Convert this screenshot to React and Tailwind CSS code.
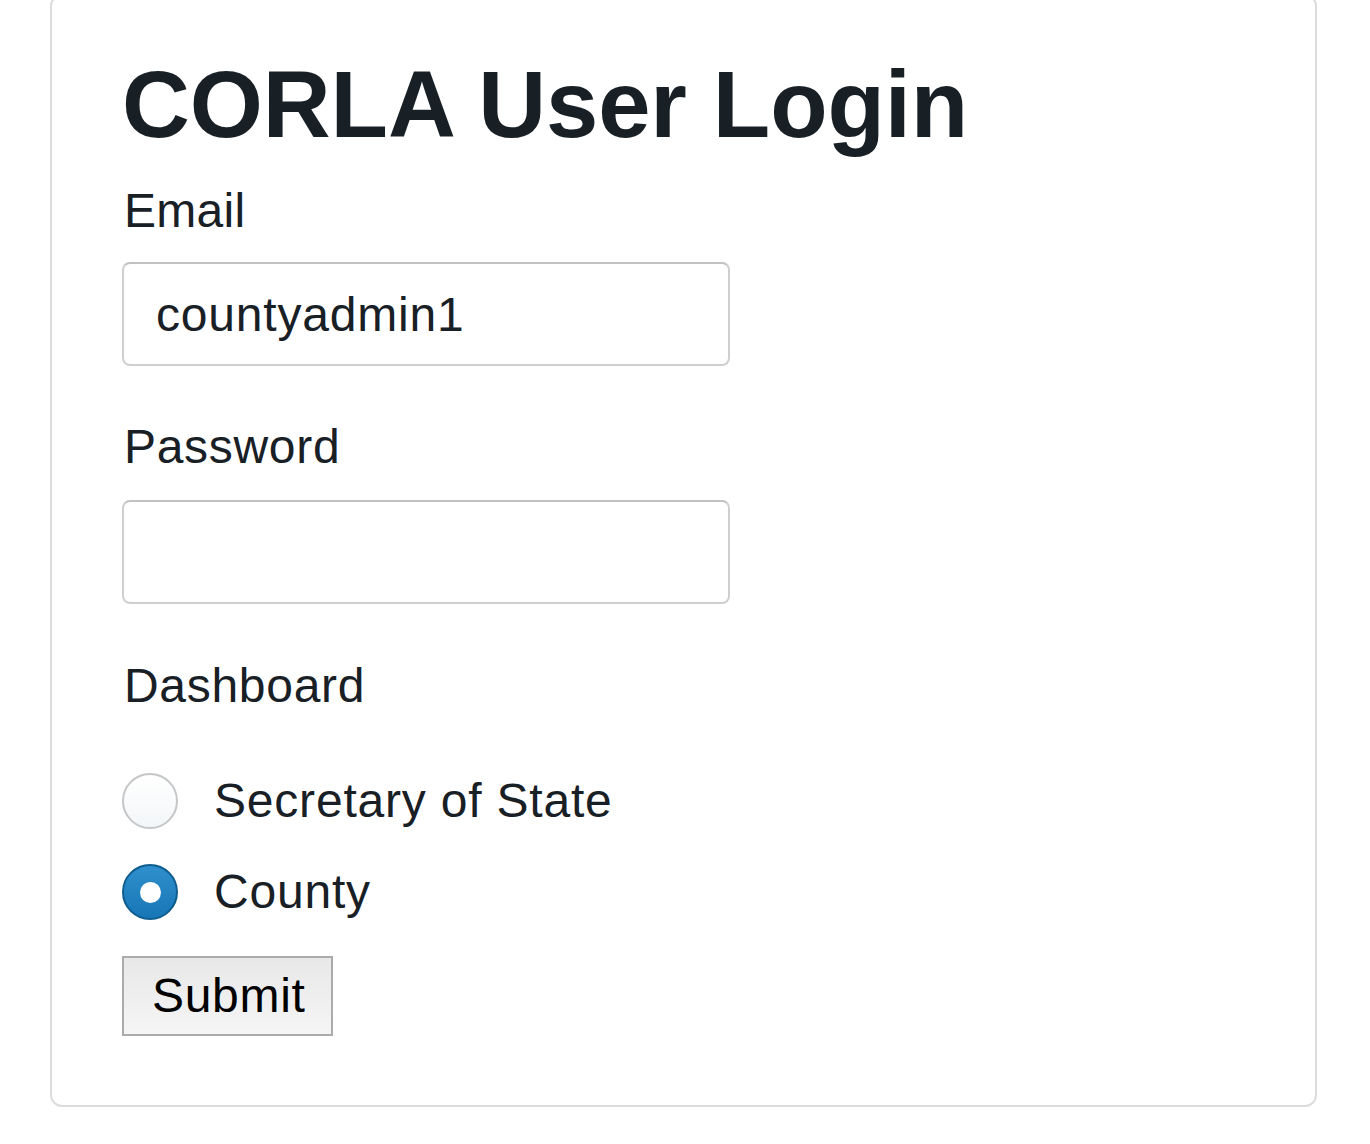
import React, { useState } from 'react';

const font = { fontFamily: '"Liberation Sans", Arial, Helvetica, sans-serif' };

const Radio = ({ checked, label, onChange }) => (
    <label className="flex items-center h-[56px] cursor-pointer">
        <span
            className={`w-[56px] h-[56px] rounded-full flex items-center justify-center shrink-0 ${
                checked
                    ? 'bg-gradient-to-b from-[#2f8fcc] to-[#1676b6] border-2 border-[#0f5d8f]'
                    : 'bg-gradient-to-b from-white to-[#f3f6f8] border-2 border-[#c4c6c8]'
            }`}
            onClick={onChange}
        >
            {checked && <span className="w-[21px] h-[21px] rounded-full bg-white" />}
        </span>
        <span className="ml-[36px] text-[48px] leading-[56px] tracking-[0.8px] text-[#182026]">{label}</span>
    </label>
);

export default function App() {
    const [dashboard, setDashboard] = useState('county');

    return (
        <div className="min-h-screen bg-white overflow-hidden" style={font}>
            <div className="ml-[50px] mt-[-6px] w-[1267px] border-2 border-[#dcdcdc] rounded-[12px] bg-white pl-[70px] pt-[62px] pb-[69px]">
                <h1 className="text-[94px] leading-[94px] font-bold text-[#182026] tracking-[-0.1px]">
                    CORLA User Login
                </h1>

                <div className="mt-[31px] ml-[2px] text-[48px] leading-[56px] tracking-[0.3px] text-[#182026]">Email</div>
                <input
                    type="text"
                    defaultValue="countyadmin1"
                    className="mt-[23px] block w-[608px] h-[104px] border-2 border-[#cfcfcf] border-t-[#c2c2c2] rounded-[8px] pl-[32px] text-[48px] tracking-[0.8px] text-[#182026] outline-none"
                    style={font}
                />

                <div className="mt-[53px] ml-[2px] text-[48px] leading-[56px] tracking-[0.7px] text-[#182026]">Password</div>
                <input
                    type="password"
                    className="mt-[25px] block w-[608px] h-[104px] border-2 border-[#cfcfcf] border-t-[#c2c2c2] rounded-[8px] pl-[32px] text-[48px] text-[#182026] outline-none"
                    style={font}
                />

                <div className="mt-[54px] ml-[2px] text-[48px] leading-[56px] tracking-[0.7px] text-[#182026]">Dashboard</div>

                <div className="mt-[59px]">
                    <Radio
                        label="Secretary of State"
                        checked={dashboard === 'sos'}
                        onChange={() => setDashboard('sos')}
                    />
                </div>
                <div className="mt-[35px]">
                    <Radio
                        label="County"
                        checked={dashboard === 'county'}
                        onChange={() => setDashboard('county')}
                    />
                </div>

                <button
                    type="button"
                    className="mt-[36px] block w-[211px] h-[80px] border-2 border-[#ababab] bg-gradient-to-b from-[#e8e8e8] to-[#f5f5f5] text-left pl-[28px] text-[48px] leading-none tracking-[0.7px] text-black"
                    style={font}
                >
                    Submit
                </button>
            </div>
        </div>
    );
}
